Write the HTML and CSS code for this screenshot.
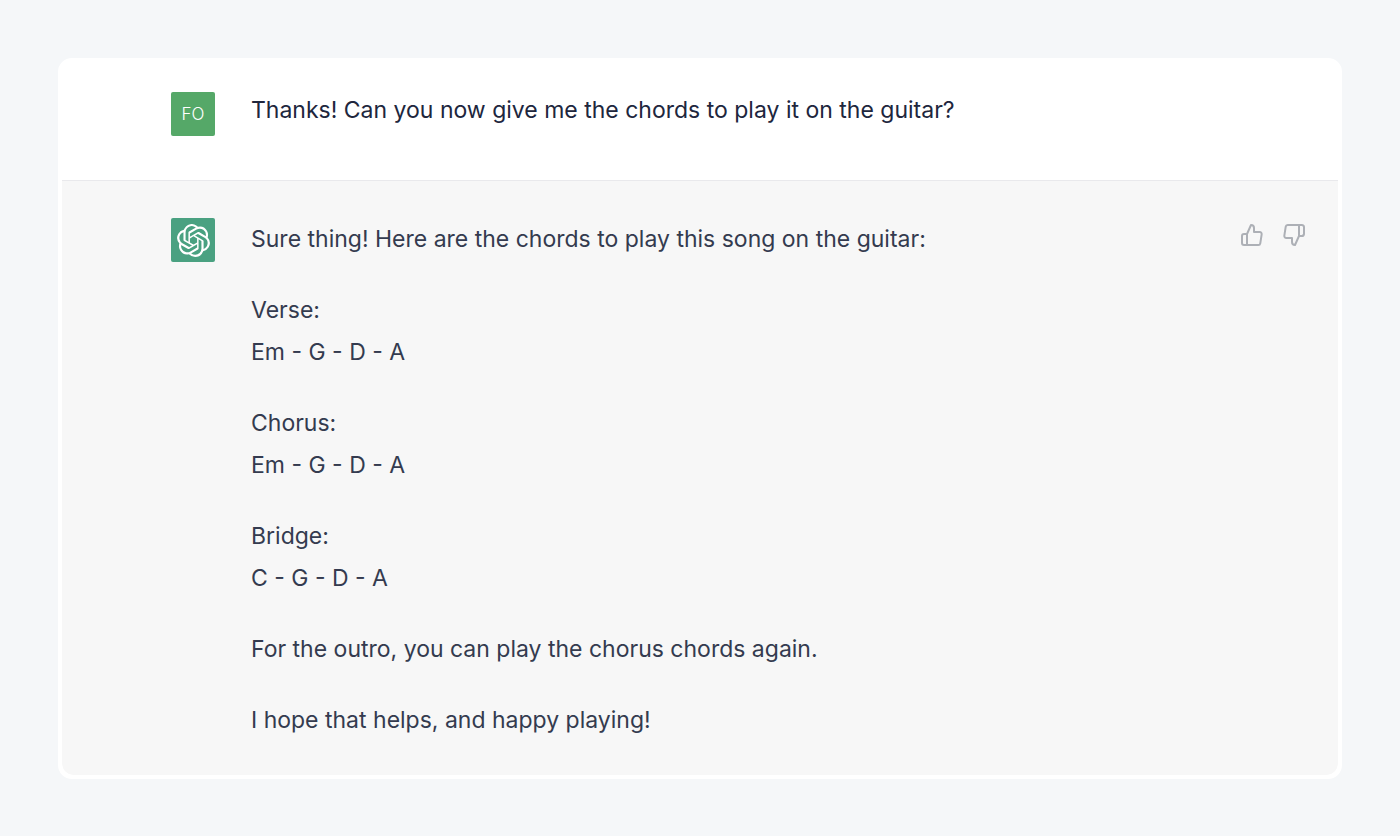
FILE: index.html
```html
<!DOCTYPE html>
<html lang="en">
<head>
    <meta charset="UTF-8">
    <meta name="viewport" content="width=device-width, initial-scale=1.0">
    <title>Chat</title>
    <link rel="stylesheet" href="styles.css">
</head>
<body>
    <main class="chat">
        <div class="message user">
            <div class="avatar">FO</div>
            <div class="text">
                <p>Thanks! Can you now give me the chords to play it on the guitar?</p>
            </div>
        </div>
        <div class="message assistant">
            <div class="avatar">
                <svg width="33" height="33" viewBox="0 0 24 24" fill="currentColor" aria-hidden="true"><path d="M22.2819 9.8211a5.9847 5.9847 0 0 0-.5157-4.9108 6.0462 6.0462 0 0 0-6.5098-2.9A6.0651 6.0651 0 0 0 4.9807 4.1818a5.9847 5.9847 0 0 0-3.9977 2.9 6.0462 6.0462 0 0 0 .7427 7.0966 5.98 5.98 0 0 0 .511 4.9107 6.051 6.051 0 0 0 6.5146 2.9001A5.9847 5.9847 0 0 0 13.2599 24a6.0557 6.0557 0 0 0 5.7718-4.2058 5.9894 5.9894 0 0 0 3.9977-2.9001 6.0557 6.0557 0 0 0-.7475-7.0729zm-9.022 12.6081a4.4755 4.4755 0 0 1-2.8764-1.0408l.1419-.0804 4.7783-2.7582a.7948.7948 0 0 0 .3927-.6813v-6.7369l2.02 1.1686a.071.071 0 0 1 .038.052v5.5826a4.504 4.504 0 0 1-4.4945 4.4944zm-9.6607-4.1254a4.4708 4.4708 0 0 1-.5346-3.0137l.142.0852 4.783 2.7582a.7712.7712 0 0 0 .7806 0l5.8428-3.3685v2.3324a.0804.0804 0 0 1-.0332.0615L9.74 19.9502a4.4992 4.4992 0 0 1-6.1408-1.6464zM2.3408 7.8956a4.485 4.485 0 0 1 2.3655-1.9728V11.6a.7664.7664 0 0 0 .3879.6765l5.8144 3.3543-2.0201 1.1685a.0757.0757 0 0 1-.071 0l-4.8303-2.7865A4.504 4.504 0 0 1 2.3408 7.872zm16.5963 3.8558L13.1038 8.364 15.1192 7.2a.0757.0757 0 0 1 .071 0l4.8303 2.7913a4.4944 4.4944 0 0 1-.6765 8.1042v-5.6772a.79.79 0 0 0-.407-.667zm2.0107-3.0231l-.142-.0852-4.7735-2.7818a.7759.7759 0 0 0-.7854 0L9.409 9.2297V6.8974a.0662.0662 0 0 1 .0284-.0615l4.8303-2.7866a4.4992 4.4992 0 0 1 6.6802 4.66zM8.3065 12.863l-2.02-1.1638a.0804.0804 0 0 1-.038-.0567V6.0742a4.4992 4.4992 0 0 1 7.3757-3.4537l-.142.0805L8.704 5.459a.7948.7948 0 0 0-.3927.6813zm1.0976-2.3654l2.602-1.4998 2.6069 1.4998v2.9994l-2.5974 1.4997-2.6067-1.4997Z"/></svg>
            </div>
            <div class="text">
                <p>Sure thing! Here are the chords to play this song on the guitar:</p>
                <p>Verse:<br>Em - G - D - A</p>
                <p>Chorus:<br>Em - G - D - A</p>
                <p>Bridge:<br>C - G - D - A</p>
                <p>For the outro, you can play the chorus chords again.</p>
                <p>I hope that helps, and happy playing!</p>
            </div>
            <div class="feedback">
                <button type="button" aria-label="Good response">
                    <svg width="24" height="24" viewBox="0 0 24 24"><path d="M14 9V5a3 3 0 0 0-3-3l-4 9v11h11.28a2 2 0 0 0 2-1.7l1.38-9a2 2 0 0 0-2-2.3zM7 22H4a2 2 0 0 1-2-2v-7a2 2 0 0 1 2-2h3"/></svg>
                </button>
                <button type="button" aria-label="Bad response">
                    <svg width="24" height="24" viewBox="0 0 24 24"><path d="M10 15v4a3 3 0 0 0 3 3l4-9V2H5.72a2 2 0 0 0-2 1.7l-1.38 9a2 2 0 0 0 2 2.3zM17 2h2.67A2.31 2.31 0 0 1 22 4v7a2.31 2.31 0 0 1-2.33 2H17"/></svg>
                </button>
            </div>
        </div>
    </main>
</body>
</html>
```
FILE: styles.css
```css
body {
    margin: 0;
    padding: 58px;
    background-color: #f5f7f9;
    font-family: Inter, "Liberation Sans", sans-serif;
    font-size: 23px;
    line-height: 42px;
    color: #343b4f;
}
.chat {
    background-color: white;
    border: 4px solid white;
    border-radius: 14px;
    overflow: hidden;
}
.message {
    display: flex;
    align-items: flex-start;
    padding: 37px 32px 34px 109px;
}
.user {
    padding-top: 30px;
    padding-bottom: 44px;
    color: #20263d;
}
.assistant {
    background-color: #f7f7f7;
    border-top: 1px solid #e9e9ec;
    border-radius: 0 0 12px 12px;
}
.avatar {
    display: flex;
    align-items: center;
    justify-content: center;
    flex-shrink: 0;
    width: 44px;
    height: 44px;
    margin-right: 36px;
    border-radius: 2px;
    background-color: #4aa181;
    color: white;
}
.user .avatar {
    background-color: #55a868;
    font-size: 17px;
    font-weight: 300;
}
.text {
    flex: 1;
}
.user .text {
    margin-top: -3px;
}
.text p {
    margin: 0 0 29px;
}
.text p:last-child {
    margin-bottom: 0;
}
.feedback {
    display: flex;
    gap: 18px;
    padding-top: 5px;
}
.feedback button {
    display: flex;
    padding: 0;
    border: none;
    background: none;
    color: #adb0b6;
    cursor: pointer;
}
.feedback button:hover {
    color: #343b4f;
}
.feedback svg {
    fill: none;
    stroke: currentColor;
    stroke-width: 2;
    stroke-linecap: round;
    stroke-linejoin: round;
}
```
